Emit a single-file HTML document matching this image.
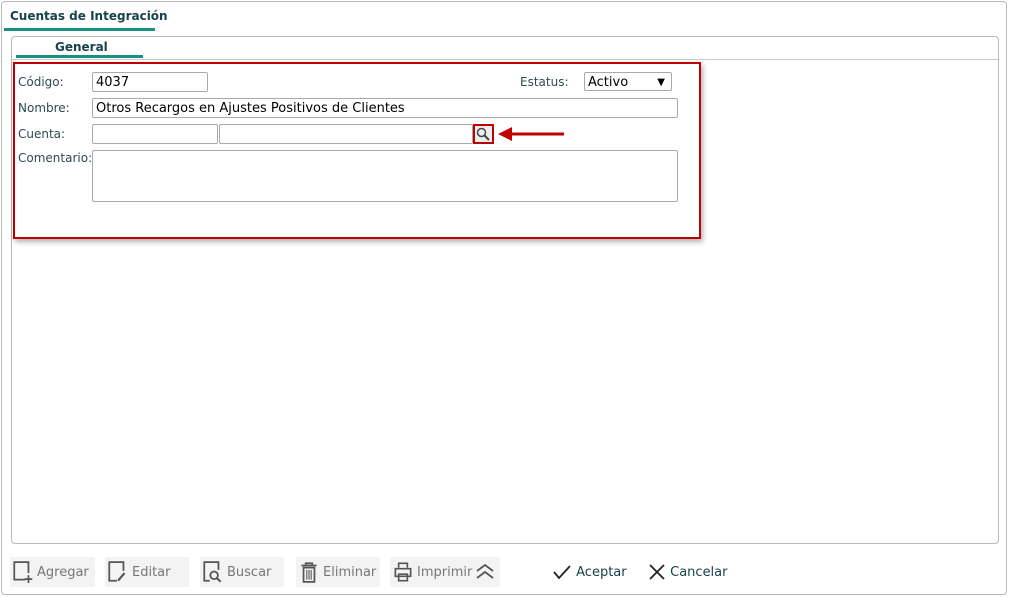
<!DOCTYPE html>
<html><head><meta charset="utf-8"><style>
*{box-sizing:border-box;margin:0;padding:0}
body{width:1010px;height:598px;background:#fff;font-family:"DejaVu Sans","Liberation Sans",sans-serif;font-size:12px;color:#333;position:relative;overflow:hidden}
.abs{position:absolute}
.outer{left:1px;top:1px;width:1006px;height:594px;border:1px solid #b8b8b8;border-radius:4px}
.t1{left:10px;top:9px;font-weight:bold;color:#17434a;font-size:12px}
.ul{background:#1a9082;height:3px}
.inner{left:11px;top:36px;width:988px;height:508px;border:1px solid #b8b8b8;border-radius:4px}
.lab{color:#2e4b52;font-size:12px}
.inp{border:1px solid #a9a9a9;border-radius:2px;background:#fff;font-size:13px;color:#000;padding:2px 3px 0;line-height:16px}
.btn{background:#f3f3f3;top:557px;height:30px;color:#777;font-size:13px;display:flex;align-items:center}
.btn svg{margin:0 3px 0 2px}
</style></head><body>
<div class="abs outer"></div>
<div class="abs t1">Cuentas de Integración</div>
<div class="abs ul" style="left:4px;top:28px;width:151px"></div>
<div class="abs inner"></div>
<div class="abs" style="left:55px;top:40px;font-weight:bold;color:#17434a">General</div>
<div class="abs ul" style="left:16px;top:55px;width:127px"></div>
<div class="abs" style="left:12px;top:59px;width:986px;height:1px;background:#ccc"></div>
<div class="abs" style="left:13px;top:62px;width:688px;height:177px;border:2px solid #c00000;box-shadow:2px 3px 5px rgba(0,0,0,.3)"></div>
<div class="abs lab" style="left:18px;top:75px">Código:</div>
<div class="abs inp" style="left:92px;top:72px;width:116px;height:20px">4037</div>
<div class="abs lab" style="left:520px;top:75px">Estatus:</div>
<div class="abs inp" style="left:584px;top:72px;width:88px;height:19px;line-height:15px">Activo<span style="position:absolute;right:6px;font-size:10px">▼</span></div>
<div class="abs lab" style="left:18px;top:101px">Nombre:</div>
<div class="abs inp" style="left:92px;top:98px;width:586px;height:20px">Otros Recargos en Ajustes Positivos de Clientes</div>
<div class="abs lab" style="left:18px;top:127px">Cuenta:</div>
<div class="abs inp" style="left:92px;top:124px;width:126px;height:20px"></div>
<div class="abs inp" style="left:219px;top:124px;width:254px;height:20px"></div>
<div class="abs" style="left:473px;top:124px;width:21px;height:20px;border:2px solid #c00000;background:#eee">
<svg width="17" height="16" viewBox="0 0 17 16"><circle cx="6.5" cy="6.5" r="4" fill="none" stroke="#444" stroke-width="1.5"/><path d="M9.5 9.5L14 14" stroke="#444" stroke-width="2"/></svg></div>
<svg class="abs" style="left:496px;top:124px" width="72" height="20"><path d="M12 10H68" stroke="#c00000" stroke-width="3"/><path d="M2 10L16 3V17Z" fill="#c00000"/></svg>
<div class="abs lab" style="left:18px;top:151px">Comentario:</div>
<div class="abs inp" style="left:92px;top:150px;width:586px;height:52px"></div>

<div class="abs btn" style="left:10px;width:85px"><svg width="22" height="24" viewBox="0 0 20 22"><path d="M12 18H2V2H15V12" fill="none" stroke="#555" stroke-width="1.6"/><path d="M15 14V21M11.5 17.5H18.5" stroke="#555" stroke-width="1.6"/></svg>Agregar</div>
<div class="abs btn" style="left:105px;width:84px"><svg width="22" height="24" viewBox="0 0 20 22"><path d="M9 19H2V2H15V10" fill="none" stroke="#555" stroke-width="1.6"/><path d="M16 12L10 19" stroke="#555" stroke-width="2"/></svg>Editar</div>
<div class="abs btn" style="left:200px;width:84px"><svg width="22" height="24" viewBox="0 0 20 22"><path d="M7 19H2V2H15V9" fill="none" stroke="#555" stroke-width="1.6"/><circle cx="11" cy="14" r="3.5" fill="none" stroke="#555" stroke-width="1.6"/><path d="M13.5 16.5L17 20" stroke="#555" stroke-width="1.8"/></svg>Buscar</div>
<div class="abs btn" style="left:296px;width:84px"><svg width="22" height="24" viewBox="0 0 20 22"><path d="M3 5H17M7 5V3H13V5M5 7H15V20H5Z" fill="none" stroke="#555" stroke-width="1.6"/><path d="M8 9V18M10 9V18M12 9V18" stroke="#555"/></svg>Eliminar</div>
<div class="abs btn" style="left:390px;width:110px"><svg width="22" height="24" viewBox="0 0 20 22"><path d="M6 7V3H14V7M3 8H17V15H3ZM6 13H14V19H6Z" fill="none" stroke="#555" stroke-width="1.5"/></svg>Imprimir<svg width="22" height="20" viewBox="0 0 22 20"><path d="M3 9L11 3L19 9M3 16L11 10L19 16" fill="none" stroke="#555" stroke-width="1.8"/></svg></div>
<div class="abs" style="left:552px;top:563px;color:#17434a;font-size:13px;display:flex;align-items:center"><svg width="20" height="18"><path d="M2 9L7 15L18 3" fill="none" stroke="#222" stroke-width="1.8"/></svg>&nbsp;Aceptar</div>
<div class="abs" style="left:648px;top:563px;color:#17434a;font-size:13px;display:flex;align-items:center"><svg width="18" height="18"><path d="M2 2L16 16M16 2L2 16" stroke="#222" stroke-width="1.8"/></svg>&nbsp;Cancelar</div>
</body></html>
